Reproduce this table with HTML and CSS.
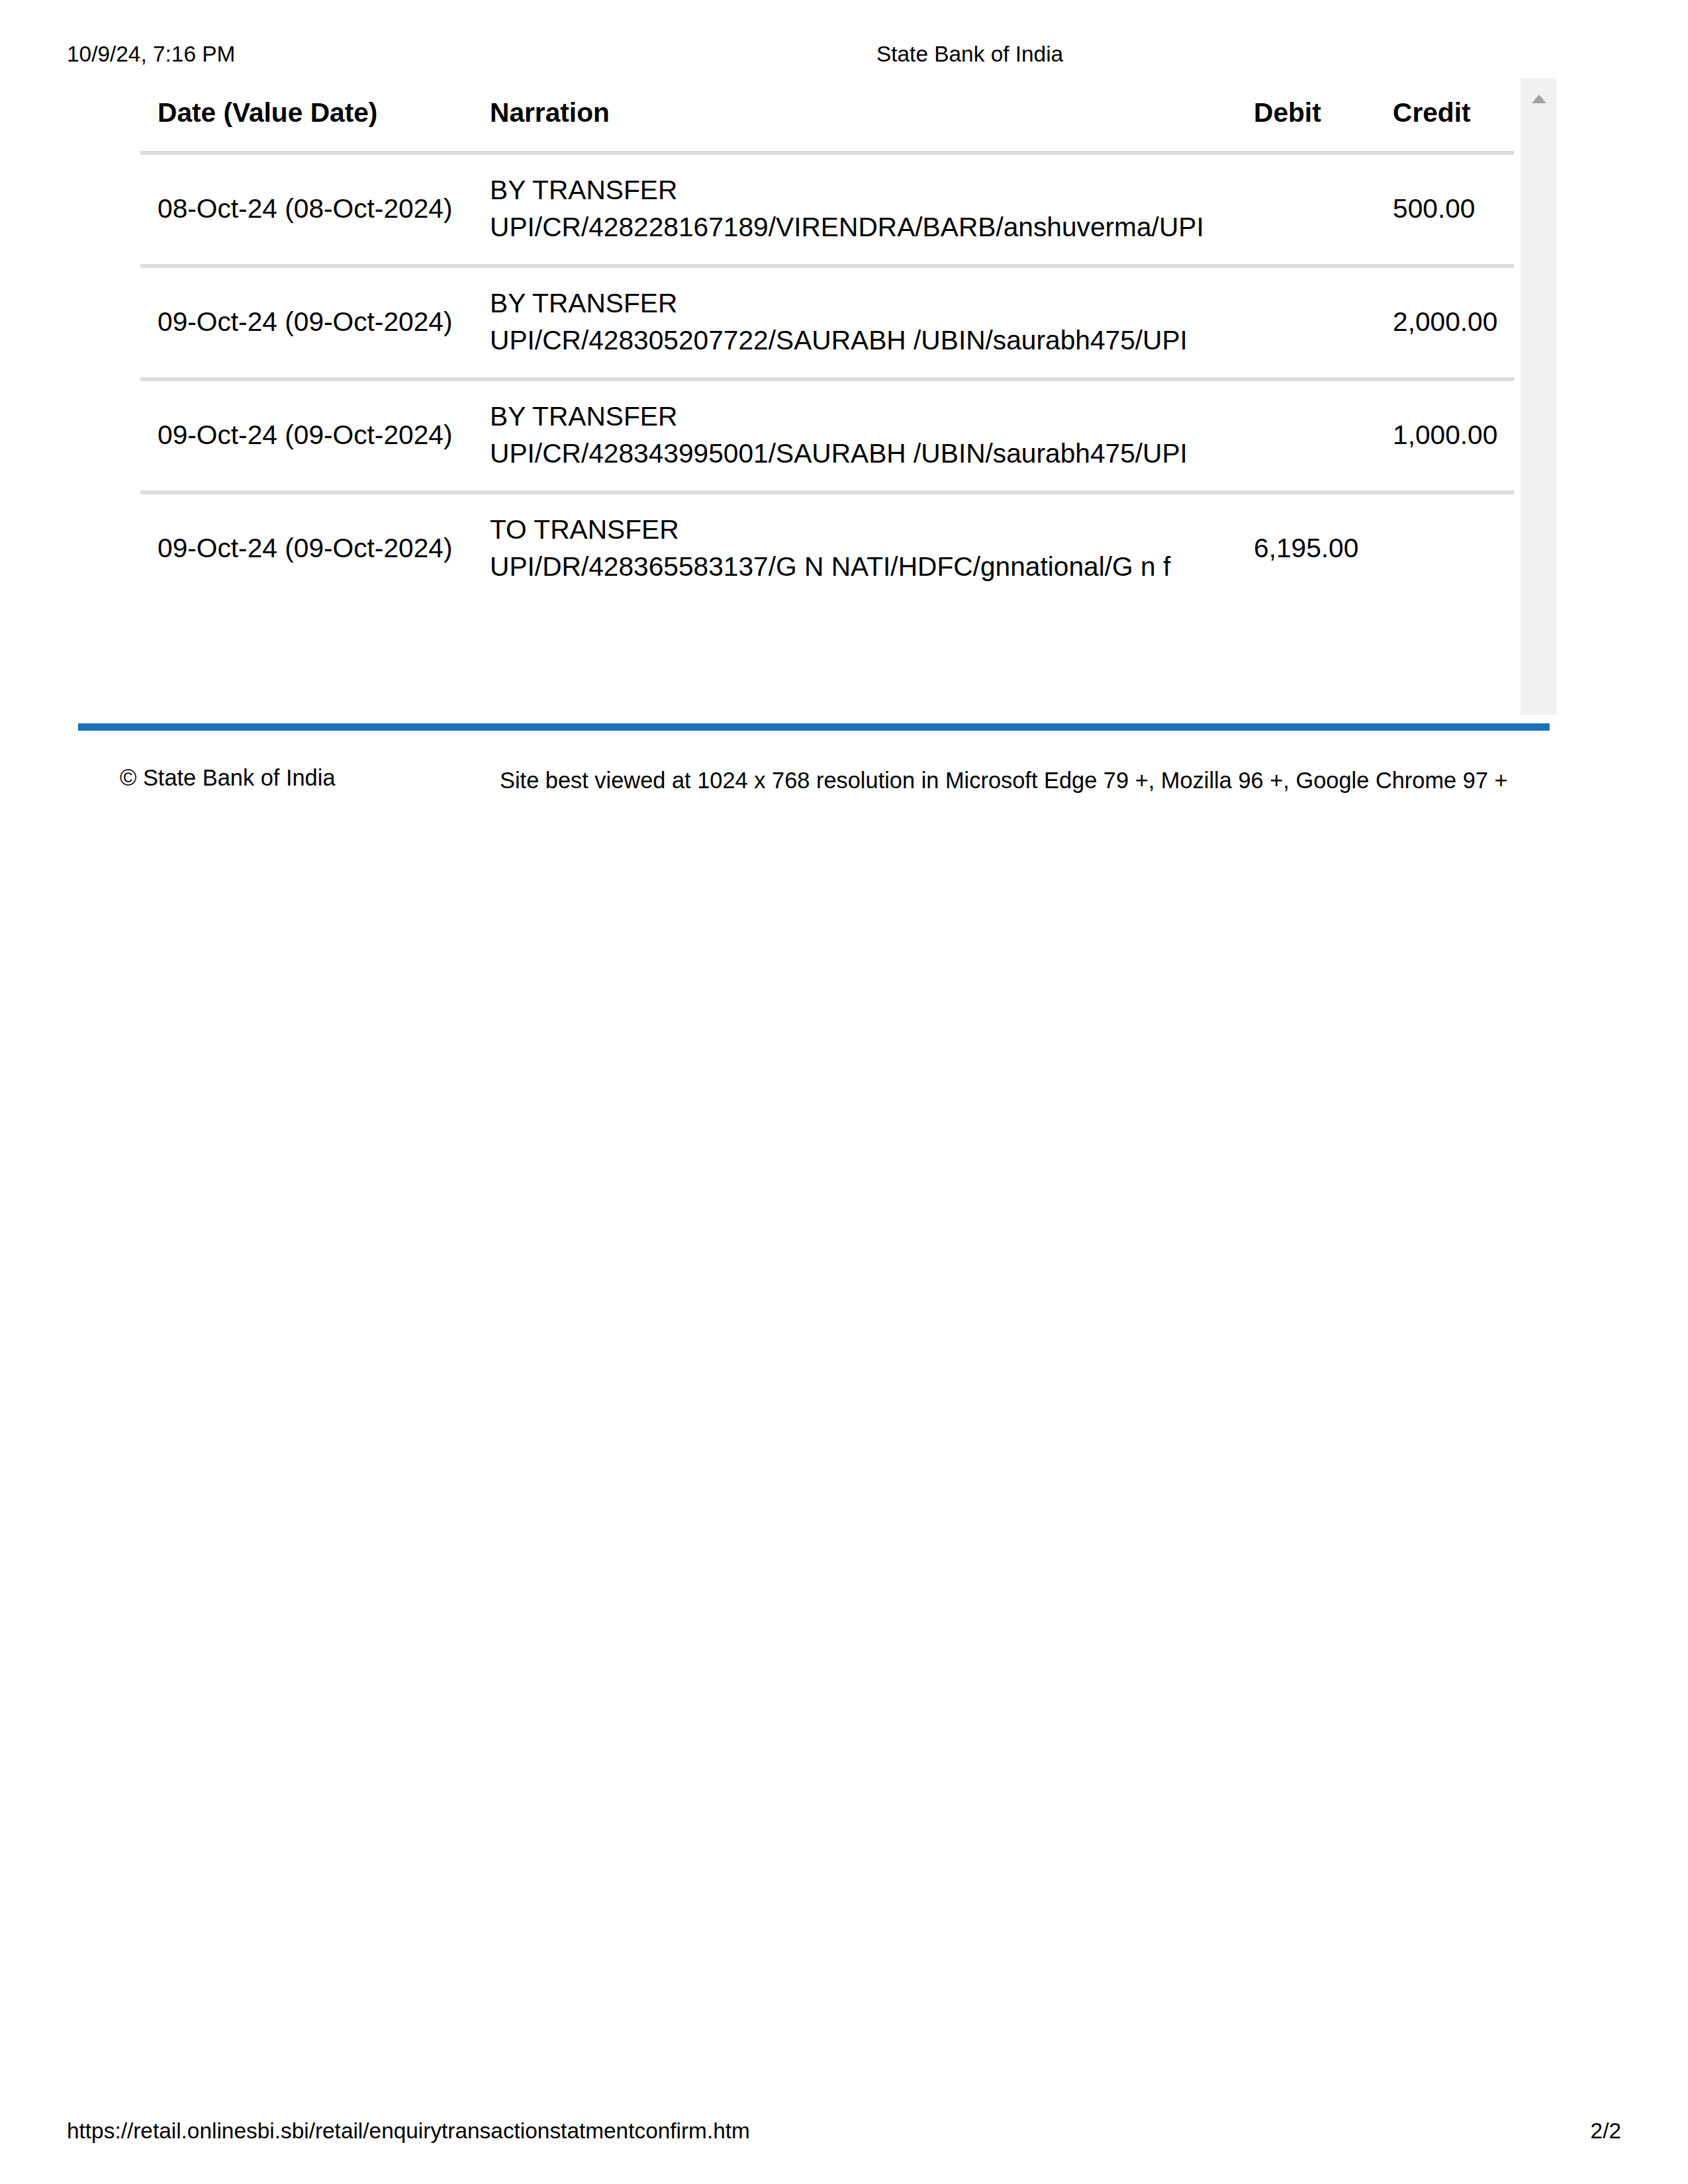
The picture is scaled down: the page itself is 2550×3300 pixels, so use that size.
FILE: index.html
```html
<!DOCTYPE html>
<html lang="en">
<head>
<meta charset="utf-8">
<title>State Bank of India</title>
<link rel="stylesheet" href="styles.css">
</head>
<body>
<div class="page">
  <header class="print-head">
    <span class="print-date">10/9/24, 7:16 PM</span>
    <span class="print-title">State Bank of India</span>
  </header>

  <section class="scroll-box">
    <div class="scroll-content">
      <table class="txn">
        <colgroup>
          <col class="c-date">
          <col class="c-narr">
          <col class="c-debit">
          <col class="c-credit">
        </colgroup>
        <thead>
          <tr>
            <th>Date (Value Date)</th>
            <th>Narration</th>
            <th>Debit</th>
            <th>Credit</th>
          </tr>
        </thead>
        <tbody>
          <tr>
            <td>08-Oct-24 (08-Oct-2024)</td>
            <td>BY TRANSFER<br>UPI/CR/428228167189/VIRENDRA/BARB/anshuverma/UPI</td>
            <td></td>
            <td>500.00</td>
          </tr>
          <tr>
            <td>09-Oct-24 (09-Oct-2024)</td>
            <td>BY TRANSFER<br>UPI/CR/428305207722/SAURABH /UBIN/saurabh475/UPI</td>
            <td></td>
            <td>2,000.00</td>
          </tr>
          <tr>
            <td>09-Oct-24 (09-Oct-2024)</td>
            <td>BY TRANSFER<br>UPI/CR/428343995001/SAURABH /UBIN/saurabh475/UPI</td>
            <td></td>
            <td>1,000.00</td>
          </tr>
          <tr>
            <td>09-Oct-24 (09-Oct-2024)</td>
            <td>TO TRANSFER<br>UPI/DR/428365583137/G N NATI/HDFC/gnnational/G n f</td>
            <td>6,195.00</td>
            <td></td>
          </tr>
        </tbody>
      </table>
    </div>
    <div class="scrollbar">
      <svg class="arrow-up" width="22" height="13" viewBox="0 0 22 13"><polygon points="11,0 22,13 0,13" fill="#a3a3a3"/></svg>
    </div>
  </section>

  <div class="blue-rule"></div>

  <footer class="site-foot">
    <span class="copy">© State Bank of India</span>
    <span class="best">Site best viewed at 1024 x 768 resolution in Microsoft Edge 79 +, Mozilla 96 +, Google Chrome 97 +</span>
  </footer>

  <footer class="print-foot">
    <span>https://retail.onlinesbi.sbi/retail/enquirytransactionstatmentconfirm.htm</span>
    <span>2/2</span>
  </footer>
</div>
</body>
</html>
```

FILE: styles.css
```css
html, body {
  margin: 0;
  padding: 0;
  background: #ffffff;
}

body {
  font-family: "Liberation Sans", Arial, sans-serif;
  color: #000000;
}

.page {
  height: 3300px;
  display: flex;
  flex-direction: column;
}

/* print header */
.print-head {
  display: flex;
  padding: 62px 0 0 101px;
  font-size: 33.4px;
  line-height: 40px;
}

.print-date {
  width: 1223px;
}

/* scroll box with table */
.scroll-box {
  margin: 16px 0 0 118px;
  width: 2233px;
  height: 962px;
  display: flex;
  overflow: hidden;
}

.scroll-content {
  flex: 1;
  padding: 0 9px 0 94px;
}

.scrollbar {
  width: 54px;
  background: #f1f1f1;
  display: flex;
  justify-content: center;
  align-items: flex-start;
}

.arrow-up {
  display: block;
  margin-top: 25px;
  margin-left: 1px;
}

.txn {
  border-collapse: collapse;
  table-layout: fixed;
  width: 2075px;
  font-size: 40.7px;
  line-height: 56px;
}

.c-date { width: 502px; }
.c-narr { width: 1154px; }
.c-debit { width: 210px; }
.c-credit { width: 209px; }

.txn th {
  text-align: left;
  font-weight: bold;
  padding: 24px 26px 30px;
  border-bottom: 6px solid #dcdcdc;
  vertical-align: middle;
}

.txn td {
  padding: 25px 26px 28px;
  vertical-align: middle;
  white-space: nowrap;
  border-bottom: 6px solid #dcdcdc;
}

.txn tbody tr:last-child td {
  border-bottom: none;
}

/* blue rule */
.blue-rule {
  margin: 13px 0 0 118px;
  width: 2223px;
  height: 11px;
  background: #1b72b9;
}

/* site footer */
.site-foot {
  display: flex;
  align-items: flex-start;
  padding: 51px 0 0 181px;
  font-size: 34.4px;
  line-height: 40px;
}

.copy {
  width: 574px;
}

.best {
  margin-top: 4px;
}

/* print footer */
.print-foot {
  margin-top: auto;
  display: flex;
  justify-content: space-between;
  padding: 0 101px 60px 101px;
  font-size: 33.4px;
  line-height: 40px;
}
```
